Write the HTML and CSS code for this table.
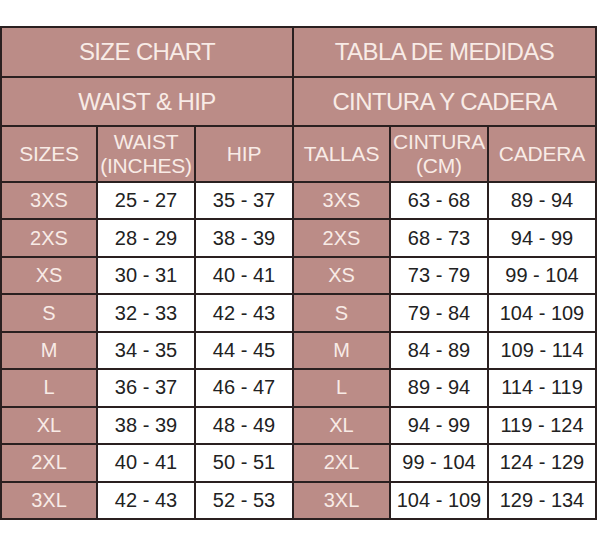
FILE: index.html
```html
<!DOCTYPE html>
<html lang="en">
<head>
<meta charset="utf-8">
<title>Size Chart</title>
<link rel="stylesheet" href="styles.css">
</head>
<body>
<div class="chart">
  <div class="cell head title span3">SIZE CHART</div>
  <div class="cell head title span3">TABLA DE MEDIDAS</div>
  <div class="cell head title span3">WAIST &amp; HIP</div>
  <div class="cell head title span3">CINTURA Y CADERA</div>

  <div class="cell head sub">SIZES</div>
  <div class="cell head sub">WAIST<br>(INCHES)</div>
  <div class="cell head sub">HIP</div>
  <div class="cell head sub">TALLAS</div>
  <div class="cell head sub">CINTURA<br>(CM)</div>
  <div class="cell head sub">CADERA</div>

  <div class="cell head size">3XS</div><div class="cell val">25 - 27</div><div class="cell val">35 - 37</div>
  <div class="cell head size">3XS</div><div class="cell val">63 - 68</div><div class="cell val">89 - 94</div>

  <div class="cell head size">2XS</div><div class="cell val">28 - 29</div><div class="cell val">38 - 39</div>
  <div class="cell head size">2XS</div><div class="cell val">68 - 73</div><div class="cell val">94 - 99</div>

  <div class="cell head size">XS</div><div class="cell val">30 - 31</div><div class="cell val">40 - 41</div>
  <div class="cell head size">XS</div><div class="cell val">73 - 79</div><div class="cell val">99 - 104</div>

  <div class="cell head size">S</div><div class="cell val">32 - 33</div><div class="cell val">42 - 43</div>
  <div class="cell head size">S</div><div class="cell val">79 - 84</div><div class="cell val">104 - 109</div>

  <div class="cell head size">M</div><div class="cell val">34 - 35</div><div class="cell val">44 - 45</div>
  <div class="cell head size">M</div><div class="cell val">84 - 89</div><div class="cell val">109 - 114</div>

  <div class="cell head size">L</div><div class="cell val">36 - 37</div><div class="cell val">46 - 47</div>
  <div class="cell head size">L</div><div class="cell val">89 - 94</div><div class="cell val">114 - 119</div>

  <div class="cell head size">XL</div><div class="cell val">38 - 39</div><div class="cell val">48 - 49</div>
  <div class="cell head size">XL</div><div class="cell val">94 - 99</div><div class="cell val">119 - 124</div>

  <div class="cell head size">2XL</div><div class="cell val">40 - 41</div><div class="cell val">50 - 51</div>
  <div class="cell head size">2XL</div><div class="cell val">99 - 104</div><div class="cell val">124 - 129</div>

  <div class="cell head size">3XL</div><div class="cell val">42 - 43</div><div class="cell val">52 - 53</div>
  <div class="cell head size">3XL</div><div class="cell val">104 - 109</div><div class="cell val">129 - 134</div>
</div>
</body>
</html>
```

FILE: styles.css
```css
html, body {
  margin: 0;
  padding: 0;
  background: #ffffff;
}

body {
  font-family: "Liberation Sans", Arial, sans-serif;
}

.chart {
  margin-top: 26px;
  width: 597px;
  height: 494px;
  box-sizing: border-box;
  padding: 2px;
  background: #2a2020;
  display: grid;
  grid-template-columns: 94px 96px 96px 95px 96px 106px;
  grid-template-rows: 48px 47px 54px repeat(9, 1fr);
  gap: 2px;
}

.cell {
  display: flex;
  align-items: center;
  justify-content: center;
  text-align: center;
  white-space: nowrap;
}

.head {
  background: #bb8c87;
  color: #f8ebe6;
}

.span3 {
  grid-column: span 3;
}

.title {
  font-size: 24px;
  letter-spacing: -0.6px;
}

.sub {
  font-size: 21px;
  line-height: 24px;
  letter-spacing: -0.2px;
}

.size {
  font-size: 20px;
}

.val {
  background: #ffffff;
  color: #222222;
  font-size: 20px;
}
```
